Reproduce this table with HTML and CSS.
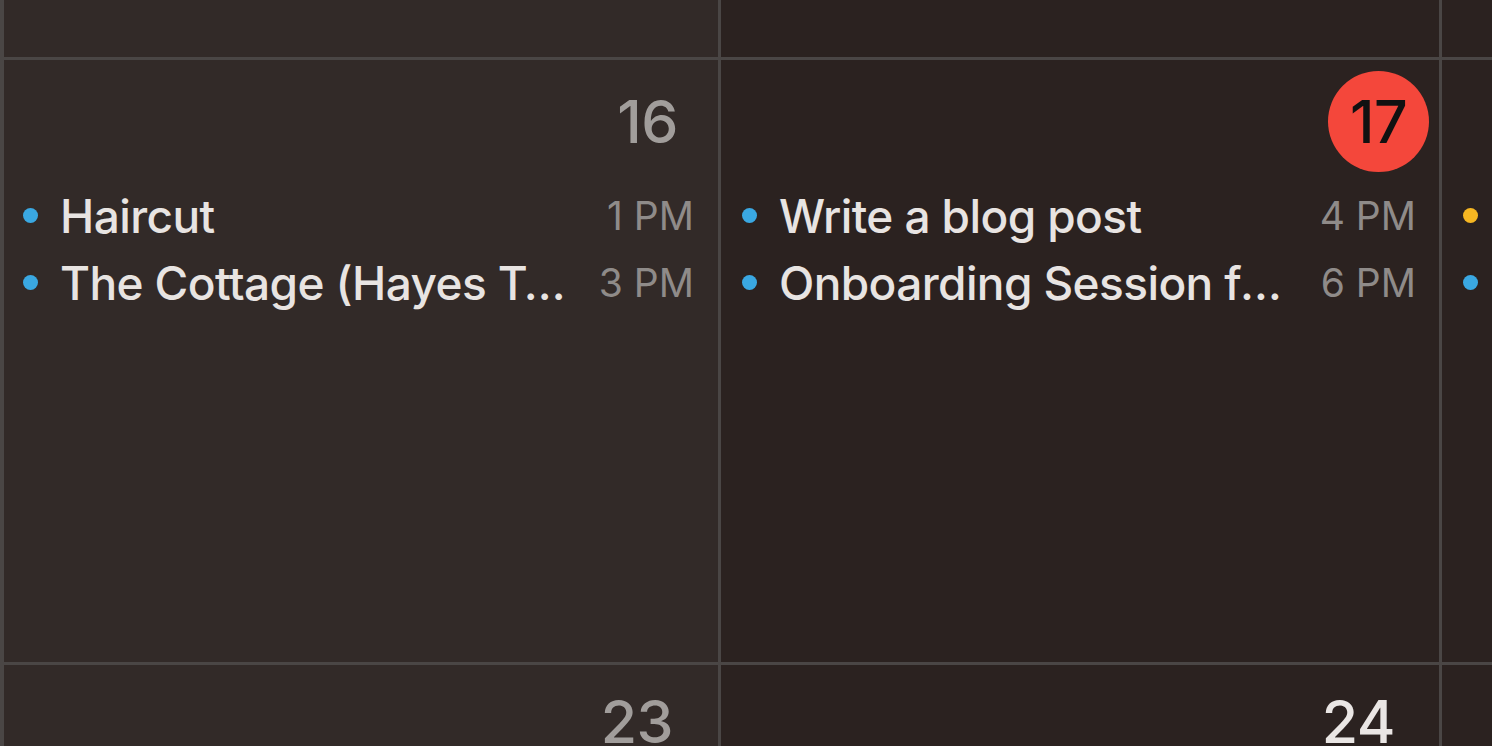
FILE: index.html
```html
<!DOCTYPE html>
<html lang="en">
<head>
<meta charset="utf-8">
<title>Calendar</title>
<link rel="stylesheet" href="styles.css">
</head>
<body>
<div class="month">
  <div class="cell weekend"></div>
  <div class="cell"></div>
  <div class="cell"></div>

  <div class="cell weekend">
    <div class="date-row date-row-16"><span class="date muted">16</span></div>
    <ul class="events">
      <li class="event"><span class="dot blue"></span><span class="title">Haircut</span><span class="time">1 PM</span></li>
      <li class="event"><span class="dot blue"></span><span class="title">The Cottage (Hayes Tavern)</span><span class="time">3 PM</span></li>
    </ul>
  </div>
  <div class="cell">
    <div class="date-row date-row-today"><span class="date today">17</span></div>
    <ul class="events events-mid">
      <li class="event"><span class="dot blue"></span><span class="title">Write a blog post</span><span class="time">4 PM</span></li>
      <li class="event"><span class="dot blue"></span><span class="title">Onboarding Session for new hires</span><span class="time">6 PM</span></li>
    </ul>
  </div>
  <div class="cell">
    <div class="date-row"></div>
    <ul class="events events-edge">
      <li class="event"><span class="dot yellow"></span></li>
      <li class="event"><span class="dot blue"></span></li>
    </ul>
  </div>

  <div class="cell weekend">
    <div class="date-row date-row-bottom date-row-23"><span class="date muted">23</span></div>
  </div>
  <div class="cell">
    <div class="date-row date-row-bottom date-row-24"><span class="date">24</span></div>
  </div>
  <div class="cell"></div>
</div>
</body>
</html>
```

FILE: styles.css
```css
html, body {
  margin: 0;
  padding: 0;
  height: 100%;
  overflow: hidden;
}
body {
  background: #4a4645;
  font-family: "Inter", "Liberation Sans", sans-serif;
}
.month {
  display: grid;
  grid-template-columns: 714px 718px 1fr;
  grid-template-rows: 57px 602px 1fr;
  column-gap: 3px;
  row-gap: 3px;
  padding-left: 4px;
  height: 746px;
  box-sizing: border-box;
  background: #4a4645;
}
.cell {
  background: #2b2220;
  overflow: hidden;
  min-width: 0;
}
.cell.weekend {
  background: #322a28;
}
.date-row {
  display: flex;
  justify-content: flex-end;
  align-items: center;
  height: 122px;
}
.date-row-16 { padding-right: 40px; }
.date-row-today { padding-right: 10px; }
.date-row-23 { padding-right: 45px; }
.date-row-24 { padding-right: 44px; }
.date-row-bottom { height: 112px; }
.date {
  font-size: 59px;
  color: #eae6e4;
  font-weight: 500;
  letter-spacing: -0.5px;
}
.date.muted {
  color: #a19d9b;
}
.date.today {
  width: 101px;
  height: 101px;
  border-radius: 50%;
  background: #f4473b;
  color: #111;
  display: flex;
  align-items: center;
  justify-content: center;
}
.events {
  list-style: none;
  margin: 0;
  padding: 0 24px 0 19px;
}
.events-mid {
  padding: 0 23px 0 21px;
}
.events-edge {
  padding: 0 0 0 21px;
}
.event {
  display: flex;
  align-items: center;
  height: 67px;
}
.dot {
  flex: none;
  width: 15px;
  height: 15px;
  border-radius: 50%;
  margin-right: 22px;
}
.dot.blue { background: #3aa8e2; }
.dot.yellow { background: #f6b722; }
.title {
  flex: 1;
  min-width: 0;
  font-size: 46px;
  font-weight: 500;
  color: #e8e4e2;
  white-space: nowrap;
  overflow: hidden;
  text-overflow: ellipsis;
  letter-spacing: -0.6px;
}
.time {
  flex: none;
  margin-left: 28px;
  font-size: 39px;
  color: #8f8b89;
}
```
